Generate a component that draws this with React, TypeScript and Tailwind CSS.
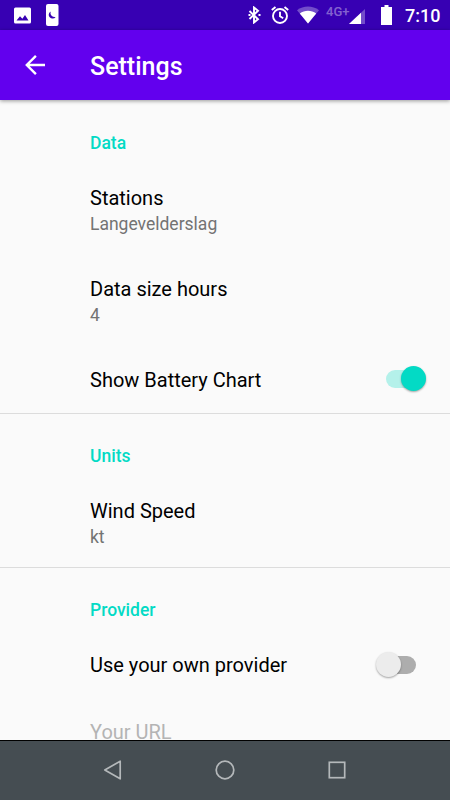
import type { ReactNode } from 'react';
import clsx from 'clsx';

function StatusBar() {
  return (
    <div className="flex h-[30px] shrink-0 items-center bg-[#3700b3] pr-[10px] pl-[14px]">
      <svg className="h-[17px] w-[17px]" viewBox="0 0 17 17">
        <rect x="0" y="0.5" width="17" height="16" rx="1.5" fill="#fff" />
        <path d="M2.500 13.500 6 9.200l2.400 2.600L11 8l3.500 5.500z" fill="#3700b3" />
      </svg>
      <svg className="ml-[15px] h-[22px] w-[13px]" viewBox="0 0 13 22">
        <rect width="12.500" height="22" rx="2" fill="#fff" />
        <path d="M4.600 7.500a3.800 3.800 0 1 0 5 5.500A4.400 4.400 0 0 1 4.600 7.500z" fill="#3700b3" />
      </svg>

      <svg className="ml-auto h-[18px] w-[13px]" viewBox="0 0 13 18" fill="none" stroke="#fff" strokeWidth="1.900">
        <path d="M1.500 5l8.500 8.300-4 3.200v-15l4 3.200L1.500 13" />
        <path d="M0.500 9h2M10.500 9h2" />
      </svg>
      <svg className="ml-[10px] h-[18px] w-[18px]" viewBox="0 0 18 18" fill="none" stroke="#fff" strokeWidth="1.900">
        <circle cx="9" cy="10" r="7" />
        <path d="M9 5.800V10.300l3.200 2M0.800 4l3.700-3.100M17.200 4l-3.700-3.100" />
      </svg>
      <svg className="ml-[8px] h-[18px] w-[22px]" viewBox="0 0 22 18">
        <path d="M11 17.500 0 4.200C6.500-.6 15.500-.6 22 4.200z" fill="#fff" opacity="0.300" />
        <path d="M11 17.500 2.800 7.500C7.500 3.900 14.500 3.900 19.200 7.500z" fill="#fff" />
      </svg>
      <span className="mb-[7px] ml-[7px] w-[23px] text-[13px] leading-[14px] font-medium whitespace-nowrap text-white/40">
        4G+
      </span>
      <svg className="mt-[3px] h-[15px] w-[16px]" viewBox="0 0 16 15">
        <path d="M0 15 16 0v15z" fill="#fff" opacity="0.300" />
        <path d="M0 15 12 3.700V15z" fill="#fff" />
      </svg>
      <svg className="ml-[16px] h-[20px] w-[11px]" viewBox="0 0 11 20">
        <path d="M3.500 0h4v2H11v18H0V2h3.500z" fill="#fff" />
      </svg>
      <span className="mt-[2px] ml-[13px] w-[35px] text-[18px] leading-[22px] font-medium whitespace-nowrap text-white">
        7:10
      </span>
    </div>
  );
}

function AppBar() {
  return (
    <header className="z-10 flex h-[70px] shrink-0 items-center bg-[#6200ee] pl-[25px] shadow-[0_1px_4px_rgba(0,0,0,0.4)]">
      <svg className="h-[20px] w-[20px]" viewBox="0 0 20 20" fill="none" stroke="#fff" strokeWidth="2.400">
        <path d="M20 10H2M10.900 .9 1.800 10l9.100 9.100" />
      </svg>
      <h1 className="mt-[4px] ml-[45px] text-[25px] leading-[30px] font-medium text-white">Settings</h1>
    </header>
  );
}

function Switch({ on }: { on: boolean }) {
  return (
    <span className="relative mb-[2px] h-[26px] w-[52px]">
      <span
        className={clsx(
          'absolute top-[4px] h-[18px] w-[35px] rounded-full',
          on ? 'left-[12px] bg-[#b4f1ea]' : 'left-[7px] bg-[#adadad]'
        )}
      />
      <span
        className={clsx(
          'absolute top-0 h-[25px] w-[25px] rounded-full shadow-[0_1px_2px_rgba(0,0,0,0.35)]',
          on ? 'left-[27px] bg-[#03dac5]' : 'left-[2px] bg-[#ececec]'
        )}
      />
    </span>
  );
}

function Category({ title, className, children }: { title: string; className?: string; children: ReactNode }) {
  return (
    <section className={className}>
      <h2 className="pb-[10px] pl-[90px] text-[17.5px] leading-[24px] font-medium text-[#03dac5]">{title}</h2>
      {children}
    </section>
  );
}

function Preference({ title, summary, disabled }: { title: string; summary?: string; disabled?: boolean }) {
  return (
    <div className="py-5 pl-[90px]">
      <div className={clsx('text-[20px] leading-[27px]', disabled ? 'text-[#b4b4b4]' : 'text-black')}>{title}</div>
      {summary && <div className="text-[17.5px] leading-[24px] text-[#737373]">{summary}</div>}
    </div>
  );
}

function SwitchPreference({ title, on }: { title: string; on: boolean }) {
  return (
    <div className={clsx('flex items-center justify-between pr-[24px] pl-[90px]', on ? 'h-[66px]' : 'h-[67px]')}>
      <span className="text-[20px] leading-[27px] text-black">{title}</span>
      <Switch on={on} />
    </div>
  );
}

function NavigationBar() {
  return (
    <nav className="flex h-[60px] shrink-0 items-center justify-center gap-[92px] border-t border-black bg-[#454d52] pb-[1px]">
      <svg className="h-[20px] w-[20px]" viewBox="0 0 20 20" fill="none" stroke="#b4b8ba" strokeWidth="1.700">
        <path d="M17.200 1.200v17.600L1.800 10z" strokeLinejoin="round" />
      </svg>
      <svg className="h-[20px] w-[20px]" viewBox="0 0 20 20" fill="none" stroke="#b4b8ba" strokeWidth="1.700">
        <circle cx="10" cy="10" r="8.800" />
      </svg>
      <svg className="h-[20px] w-[20px]" viewBox="0 0 20 20" fill="none" stroke="#b4b8ba" strokeWidth="1.700">
        <rect x="2.300" y="2.300" width="15.400" height="15.400" />
      </svg>
    </nav>
  );
}

export default function App() {
  return (
    <div className="flex h-[800px] w-[450px] flex-col overflow-hidden bg-[#fafafa] font-[Roboto,sans-serif]">
      <StatusBar />
      <AppBar />
      <main className="min-h-0 flex-1 overflow-hidden">
        <Category title="Data" className="pt-[31px]">
          <Preference title="Stations" summary="Langevelderslag" />
          <Preference title="Data size hours" summary="4" />
          <SwitchPreference title="Show Battery Chart" on />
        </Category>
        <Category title="Units" className="border-t border-[#dcdcdc] pt-[30px]">
          <Preference title="Wind Speed" summary="kt" />
        </Category>
        <Category title="Provider" className="-mt-[2px] border-t border-[#dcdcdc] pt-[30px]">
          <SwitchPreference title="Use your own provider" on={false} />
          <Preference title="Your URL" disabled />
        </Category>
      </main>
      <NavigationBar />
    </div>
  );
}
